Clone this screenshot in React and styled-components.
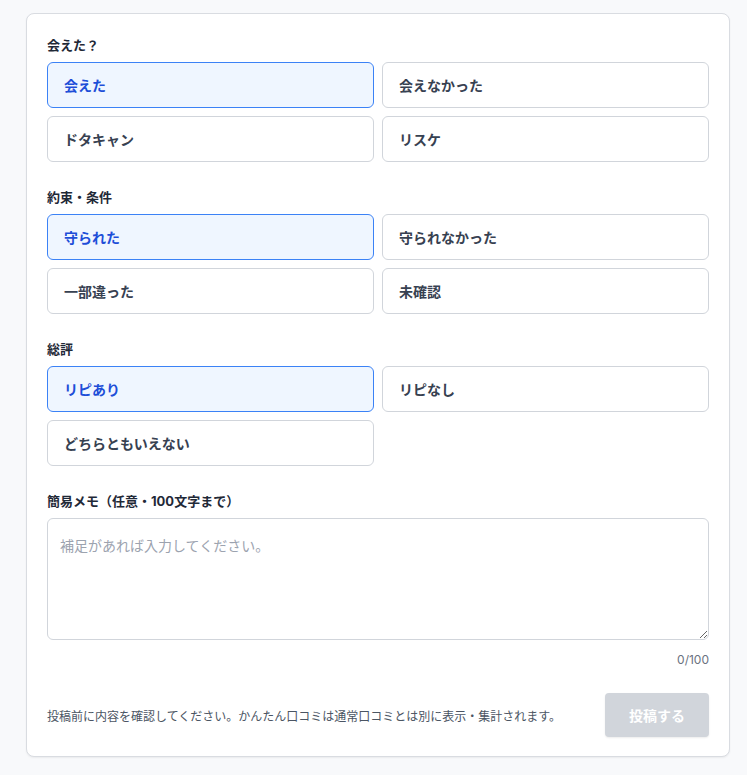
import React, { useState } from 'react';
import styled, { createGlobalStyle } from 'styled-components';

const Global = createGlobalStyle`
  body {
    margin: 0;
    background: #f8f9fb;
    font-family: Inter, "Noto Sans CJK JP", sans-serif;
  }
`;

const Page = styled.div`
  padding: 13px 17px 20px 26px;
`;

const Card = styled.div`
  background: #fff;
  border: 1px solid #d9dce1;
  border-radius: 8px;
  box-shadow: 0 1px 2px rgba(0, 0, 0, 0.06);
  padding: 20px 20px 19px;
  display: flex;
  flex-direction: column;
  gap: 24px;
`;

const Section = styled.div`
  display: flex;
  flex-direction: column;
  gap: 8px;
`;

const Label = styled.div`
  font-size: 13px;
  font-weight: 700;
  color: #1f2937;
  line-height: 18px;
  padding-top: 2px;
`;

const Grid = styled.div`
  display: grid;
  grid-template-columns: 1fr 1fr;
  gap: 8px;
`;

const Option = styled.button`
  height: 46px;
  text-align: left;
  padding: 0 16px;
  border-radius: 6px;
  font-family: inherit;
  font-size: 14px;
  font-weight: 700;
  cursor: pointer;
  border: 1px solid ${p => (p.$active ? '#3b82f6' : '#d1d5db')};
  background: ${p => (p.$active ? '#eff6ff' : '#fff')};
  color: ${p => (p.$active ? '#1d4ed8' : '#374151')};
`;

const TextArea = styled.textarea`
  box-sizing: border-box;
  width: 100%;
  height: 122px;
  border: 1px solid #d1d5db;
  border-radius: 6px;
  padding: 16px 12px;
  font-family: inherit;
  font-size: 14px;
  color: #374151;
  &::placeholder { color: #9ca3af; }
`;

const Counter = styled.div`
  text-align: right;
  font-size: 12px;
  color: #6b7280;
  margin-top: 8px;
`;

const Footer = styled.div`
  display: flex;
  align-items: center;
  justify-content: space-between;
  margin-top: 2px;
`;

const Note = styled.div`
  font-size: 12px;
  color: #4b5563;
`;

const Submit = styled.button`
  width: 104px;
  height: 44px;
  border: none;
  border-radius: 4px;
  background: #d1d5db;
  color: #fff;
  font-family: inherit;
  font-size: 14px;
  font-weight: 700;
  box-shadow: 0 1px 2px rgba(0, 0, 0, 0.08);
`;

const groups = [
  { label: '会えた？', options: ['会えた', '会えなかった', 'ドタキャン', 'リスケ'] },
  { label: '約束・条件', options: ['守られた', '守られなかった', '一部違った', '未確認'] },
  { label: '総評', options: ['リピあり', 'リピなし', 'どちらともいえない'] },
];

export default function App() {
  const [sel, setSel] = useState(groups.map(g => g.options[0]));
  const [memo, setMemo] = useState('');
  return (
    <Page>
      <Global />
      <Card>
        {groups.map((g, i) => (
          <Section key={g.label}>
            <Label>{g.label}</Label>
            <Grid>
              {g.options.map(o => (
                <Option
                  key={o}
                  $active={sel[i] === o}
                  onClick={() => setSel(s => s.map((v, j) => (j === i ? o : v)))}
                >
                  {o}
                </Option>
              ))}
            </Grid>
          </Section>
        ))}
        <Section>
          <Label>簡易メモ（任意・100文字まで）</Label>
          <div>
            <TextArea
              placeholder="補足があれば入力してください。"
              maxLength={100}
              value={memo}
              onChange={e => setMemo(e.target.value)}
            />
            <Counter>{memo.length}/100</Counter>
          </div>
        </Section>
        <Footer>
          <Note>投稿前に内容を確認してください。かんたん口コミは通常口コミとは別に表示・集計されます。</Note>
          <Submit disabled>投稿する</Submit>
        </Footer>
      </Card>
    </Page>
  );
}
